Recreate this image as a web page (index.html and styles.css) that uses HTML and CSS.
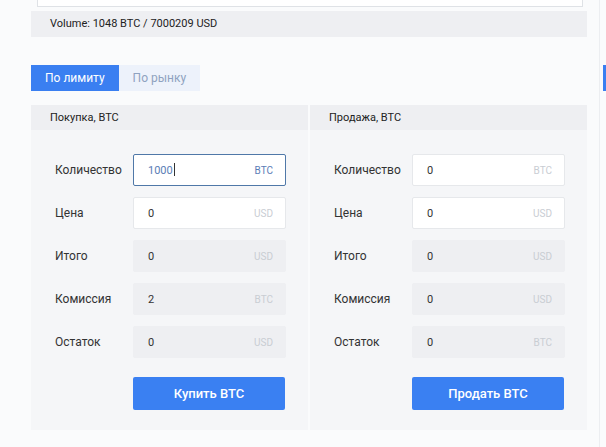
FILE: index.html
```html
<!DOCTYPE html>
<html lang="ru">
<head>
    <meta charset="UTF-8">
    <meta name="viewport" content="width=device-width, initial-scale=1.0">
    <title>Торговля BTC/USD</title>
    <link rel="stylesheet" href="styles.css">
</head>
<body>
<div class="page">
    <div class="main">
        <div class="search-box"></div>
        <div class="volume">Volume: 1048 BTC / 7000209 USD</div>

        <div class="tabs">
            <div class="tab active">По лимиту</div>
            <div class="tab">По рынку</div>
        </div>

        <div class="panels">
            <form class="panel">
                <div class="panel-head">Покупка, BTC</div>
                <div class="panel-body">
                    <div class="form-row">
                        <label>Количество</label>
                        <div class="field focus"><span class="value">1000<i class="caret"></i></span><span class="unit">BTC</span></div>
                    </div>
                    <div class="form-row">
                        <label>Цена</label>
                        <div class="field"><span class="value">0</span><span class="unit">USD</span></div>
                    </div>
                    <div class="form-row">
                        <label>Итого</label>
                        <div class="field off"><span class="value">0</span><span class="unit">USD</span></div>
                    </div>
                    <div class="form-row">
                        <label>Комиссия</label>
                        <div class="field off"><span class="value">2</span><span class="unit">BTC</span></div>
                    </div>
                    <div class="form-row">
                        <label>Остаток</label>
                        <div class="field off"><span class="value">0</span><span class="unit">USD</span></div>
                    </div>
                    <div class="form-row">
                        <label></label>
                        <button type="button" class="btn">Купить BTC</button>
                    </div>
                </div>
            </form>

            <form class="panel">
                <div class="panel-head">Продажа, BTC</div>
                <div class="panel-body">
                    <div class="form-row">
                        <label>Количество</label>
                        <div class="field"><span class="value">0</span><span class="unit">BTC</span></div>
                    </div>
                    <div class="form-row">
                        <label>Цена</label>
                        <div class="field"><span class="value">0</span><span class="unit">USD</span></div>
                    </div>
                    <div class="form-row">
                        <label>Итого</label>
                        <div class="field off"><span class="value">0</span><span class="unit">USD</span></div>
                    </div>
                    <div class="form-row">
                        <label>Комиссия</label>
                        <div class="field off"><span class="value">0</span><span class="unit">USD</span></div>
                    </div>
                    <div class="form-row">
                        <label>Остаток</label>
                        <div class="field off"><span class="value">0</span><span class="unit">BTC</span></div>
                    </div>
                    <div class="form-row">
                        <label></label>
                        <button type="button" class="btn">Продать BTC</button>
                    </div>
                </div>
            </form>
        </div>
    </div>

    <div class="side">
        <div class="side-tab"></div>
    </div>
</div>
</body>
</html>
```

FILE: styles.css
```css
body {
	margin: 0;
	padding: 0;
	background-color: #fafbfc;
	color: #333;
	font-family: Roboto, "Liberation Sans", Arial, sans-serif;
	overflow: hidden;
}

.page {
	display: flex;
	width: 606px;
	height: 447px;
	overflow: hidden;
}

.main {
	width: 556px;
	margin-left: 31px;
	flex: none;
}

/* cut off search box above the volume bar */
.search-box {
	height: 6px;
	margin: 0 4px 0 6px;
	background-color: #fff;
	border: 1px solid #dfe2e6;
	border-top: none;
}

.volume {
	margin-top: 4px;
	height: 26px;
	line-height: 26px;
	padding-left: 19px;
	background-color: #eeeff2;
	font-size: 11px;
	color: #222;
}

.tabs {
	display: flex;
	margin-top: 28px;
}

.tab {
	height: 26px;
	line-height: 26px;
	padding: 0 14px;
	font-size: 12px;
	background-color: #edf2fb;
	color: #8fa2c0;
}

.tab.active {
	background-color: #3a7ff1;
	color: #fff;
	padding: 0 14px;
}

.panels {
	display: flex;
	gap: 2px;
	margin-top: 14px;
}

.panel {
	width: 277px;
	margin: 0;
	background-color: #f5f6f8;
}

.panel-head {
	height: 25px;
	line-height: 25px;
	padding-left: 19px;
	background-color: #eeeff2;
	font-size: 11px;
	color: #222;
}

.panel-body {
	display: flex;
	flex-direction: column;
	gap: 11px;
	padding: 24px 22px 20px 24px;
}

.form-row {
	display: flex;
	align-items: center;
}

.form-row:last-child {
	margin-top: 8px;
}

label {
	width: 78px;
	font-size: 12px;
	color: #333;
}

.field {
	display: flex;
	justify-content: space-between;
	align-items: center;
	width: 153px;
	height: 32px;
	padding: 0 12px 0 14px;
	box-sizing: border-box;
	background-color: #fff;
	border: 1px solid #e6e8eb;
	border-radius: 2px;
	font-size: 11px;
	color: #333;
}

.field .unit {
	color: #c9cdd3;
	font-size: 10px;
}

.field.off {
	background-color: #eeeff2;
	border-color: #eeeff2;
}

.field.focus {
	border-color: #4f78a8;
	color: #5a7db6;
}

.field.focus .unit {
	color: #5a7db6;
}

.caret {
	display: inline-block;
	width: 1px;
	height: 13px;
	margin-left: 1px;
	vertical-align: -2px;
	background-color: #333;
}

.btn {
	width: 152px;
	height: 33px;
	border: none;
	border-radius: 2px;
	background-color: #3a80f2;
	color: #fff;
	font-family: inherit;
	font-size: 13px;
	font-weight: 500;
	cursor: pointer;
}

.btn:hover {
	background-color: #2f6fd8;
}

.side {
	padding-top: 65px;
	padding-left: 3px;
	margin-left: 12px;
	border-left: 1px solid #eceef1;
}

.side-tab {
	width: 20px;
	height: 26px;
	background-color: #3a7ff1;
}
```
